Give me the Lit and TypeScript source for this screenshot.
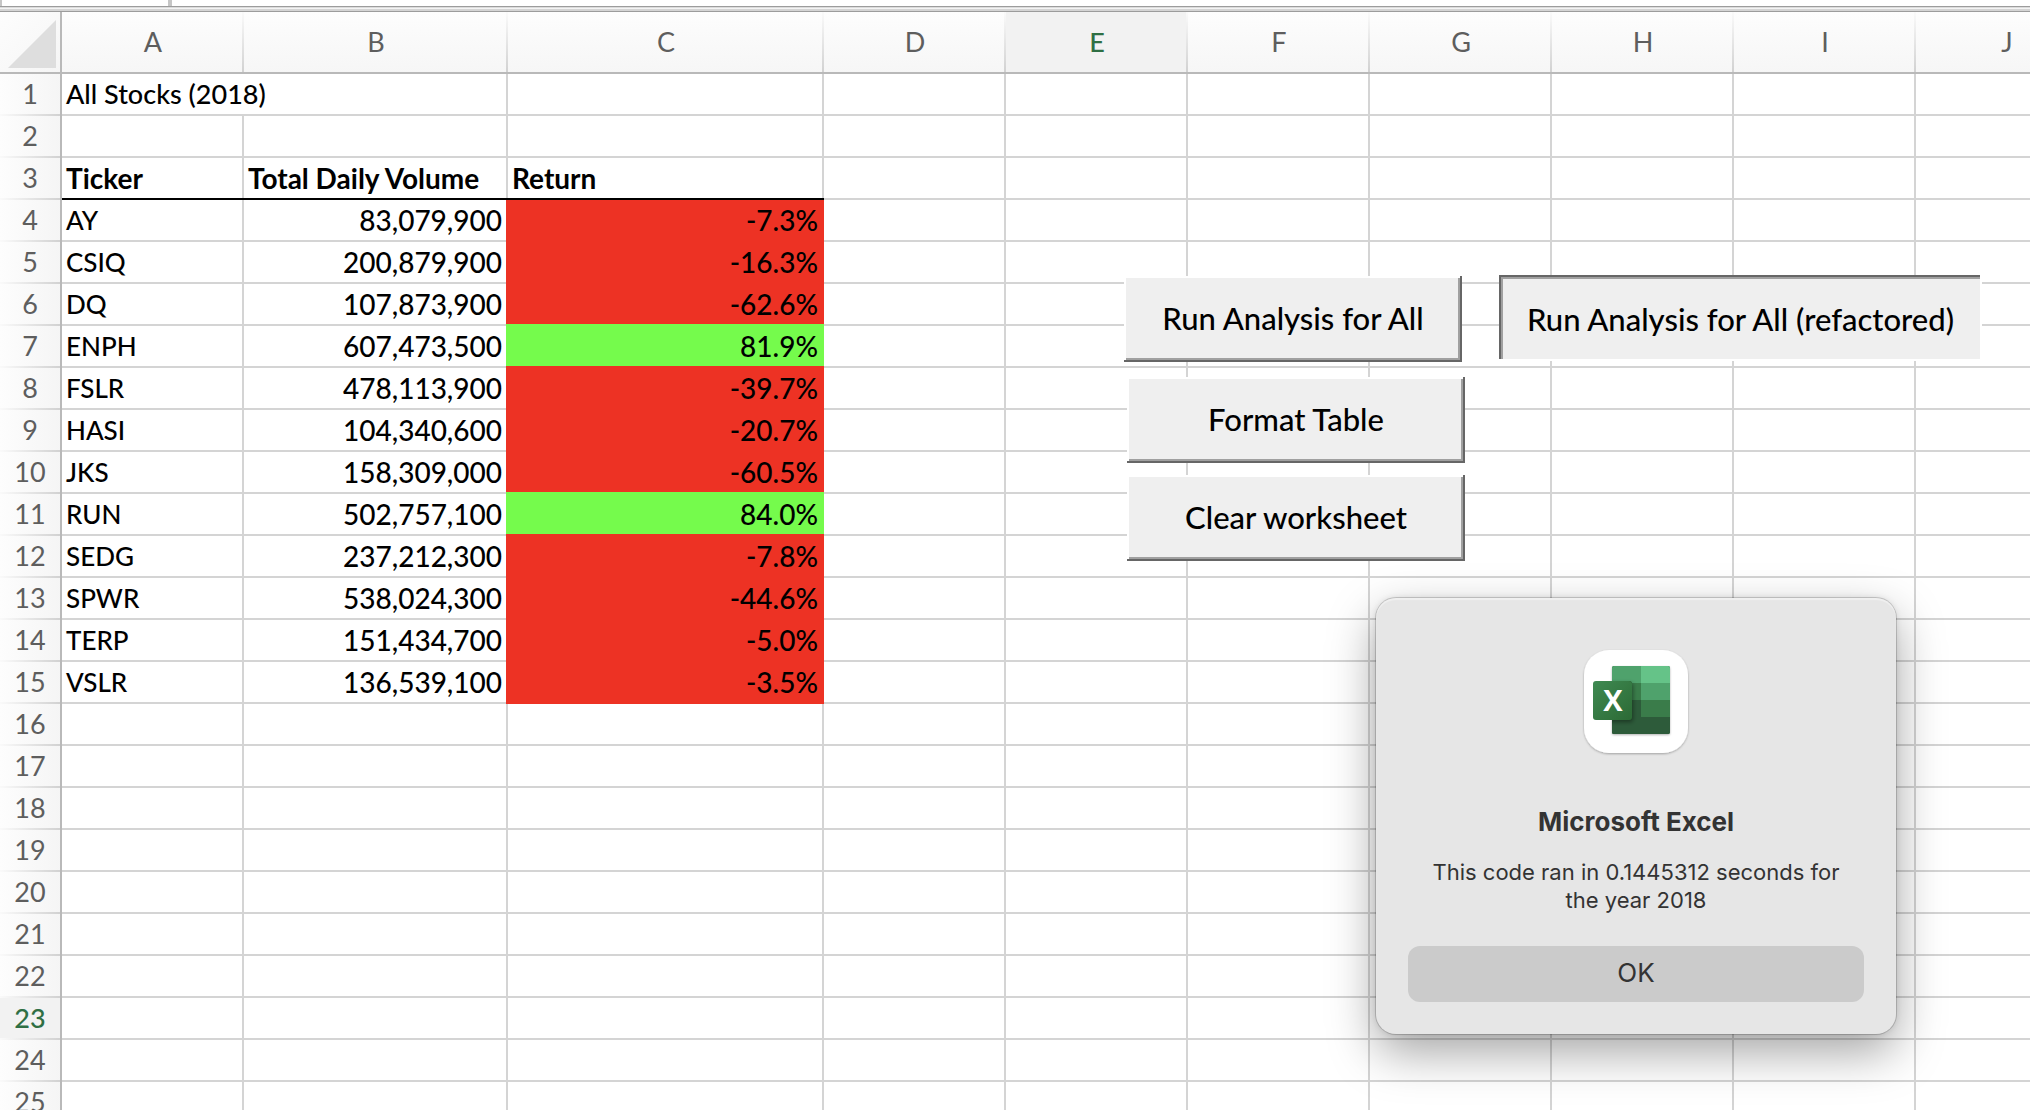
import { LitElement, html, css, svg, nothing } from "lit";
import { customElement, property } from "lit/decorators.js";

interface Stock {
  ticker: string;
  volume: string;
  change: string;
}

const COLUMNS = ["A", "B", "C", "D", "E", "F", "G", "H", "I", "J"];
const ROW_COUNT = 25;
const ACTIVE_COLUMN = "E";
const ACTIVE_ROW = 23;
const FIRST_STOCK_ROW = 4;

const STOCKS: Stock[] = [
  { ticker: "AY", volume: "83,079,900", change: "-7.3%" },
  { ticker: "CSIQ", volume: "200,879,900", change: "-16.3%" },
  { ticker: "DQ", volume: "107,873,900", change: "-62.6%" },
  { ticker: "ENPH", volume: "607,473,500", change: "81.9%" },
  { ticker: "FSLR", volume: "478,113,900", change: "-39.7%" },
  { ticker: "HASI", volume: "104,340,600", change: "-20.7%" },
  { ticker: "JKS", volume: "158,309,000", change: "-60.5%" },
  { ticker: "RUN", volume: "502,757,100", change: "84.0%" },
  { ticker: "SEDG", volume: "237,212,300", change: "-7.8%" },
  { ticker: "SPWR", volume: "538,024,300", change: "-44.6%" },
  { ticker: "TERP", volume: "151,434,700", change: "-5.0%" },
  { ticker: "VSLR", volume: "136,539,100", change: "-3.5%" },
];

@customElement("sheet-grid")
export class SheetGrid extends LitElement {
  static styles = css`
    :host {
      display: block;
      --line: #d4d4d4;
      --edge: #b9b9b9;
    }
    .grid {
      width: 2098px;
      table-layout: fixed;
      border-collapse: separate;
      border-spacing: 0;
      color: #000;
      font: 400 27px/40px Lato, "Liberation Sans", sans-serif;
    }
    .col-rows {
      width: 62px;
    }
    .col-b {
      width: 264px;
    }
    .col-c {
      width: 316px;
    }
    .col {
      width: 182px;
    }
    th,
    td {
      box-sizing: border-box;
      height: 42px;
      padding: 0 6px 2px 4px;
      white-space: nowrap;
      text-align: left;
      font-weight: 400;
    }
    td {
      --bottom: var(--line);
      font-weight: 500;
      background:
        linear-gradient(var(--bottom), var(--bottom)) left bottom / 100% 2px no-repeat,
        linear-gradient(var(--line), var(--line)) right top / 2px 100% no-repeat,
        #fff;
    }
    .corner,
    .column {
      height: 62px;
      padding: 0 0 2px;
      text-align: center;
      color: #5e5e5e;
    }
    .corner {
      background:
        linear-gradient(var(--edge), var(--edge)) left bottom / 100% 2px no-repeat,
        linear-gradient(var(--edge), var(--edge)) right top / 2px 100% no-repeat,
        linear-gradient(135deg, #fdfdfd, #f5f5f5);
    }
    .corner svg {
      display: block;
    }
    .column {
      background:
        linear-gradient(var(--edge), var(--edge)) left bottom / 100% 2px no-repeat,
        linear-gradient(#fafafa, #d0d0d0) right top / 2px 100% no-repeat,
        linear-gradient(#fdfdfd, #f6f6f6);
    }
    .column.active {
      color: #2f6f44;
      font-weight: 500;
      background:
        linear-gradient(var(--edge), var(--edge)) left bottom / 100% 2px no-repeat,
        linear-gradient(#fafafa, #d0d0d0) right top / 2px 100% no-repeat,
        #f2f2f2;
    }
    .row {
      padding: 0 2px 2px 0;
      text-align: center;
      color: #5e5e5e;
      background:
        linear-gradient(var(--edge), var(--edge)) right top / 2px 100% no-repeat,
        linear-gradient(90deg, #fafafa, #d0d0d0) left bottom / 100% 2px no-repeat,
        linear-gradient(90deg, #fdfdfd, #f5f5f5);
    }
    .row.active {
      color: #2f6f44;
      font-weight: 500;
      background:
        linear-gradient(var(--edge), var(--edge)) right top / 2px 100% no-repeat,
        linear-gradient(90deg, #fafafa, #d0d0d0) left bottom / 100% 2px no-repeat,
        #f2f2f2;
    }
    .heading {
      --bottom: #000;
      font-weight: 700;
      font-size: 28px;
    }
    .ticker {
      font-size: 26px;
    }
    .number {
      text-align: right;
      font-size: 28px;
    }
    .loss,
    .gain {
      background: var(--fill);
      box-shadow: -2px 0 0 var(--fill), 0 -2px 0 var(--fill), -2px -2px 0 var(--fill);
    }
    .loss {
      --fill: #ed3224;
    }
    .gain {
      --fill: #75fb4c;
    }
    .first {
      box-shadow: -2px 0 0 var(--fill);
    }
  `;

  private blanks(from: number) {
    return COLUMNS.slice(from).map(() => html`<td></td>`);
  }

  private cells(row: number) {
    if (row === 1) return html`<td colspan="2">All Stocks (2018)</td>${this.blanks(2)}`;
    if (row === 3) {
      return html`<td class="heading">Ticker</td>
        <td class="heading">Total Daily Volume</td>
        <td class="heading">Return</td>
        ${this.blanks(3)}`;
    }
    const stock = STOCKS[row - FIRST_STOCK_ROW];
    if (!stock) return this.blanks(0);
    const tone = stock.change.startsWith("-") ? "loss" : "gain";
    const first = row === FIRST_STOCK_ROW ? "first" : "";
    return html`<td class="ticker">${stock.ticker}</td>
      <td class="number">${stock.volume}</td>
      <td class="number ${tone} ${first}">${stock.change}</td>
      ${this.blanks(3)}`;
  }

  render() {
    const rows = Array.from({ length: ROW_COUNT }, (_, i) => i + 1);
    return html`
      <table class="grid">
        <colgroup>
          <col class="col-rows" />
          ${COLUMNS.map((c) => html`<col class=${c === "B" ? "col-b" : c === "C" ? "col-c" : "col"} />`)}
        </colgroup>
        <thead>
          <tr>
            <td class="corner">
              <svg width="60" height="60" viewBox="0 0 60 60" aria-hidden="true">
                <path d="M56 8V56H8Z" fill="#dedede" />
              </svg>
            </td>
            ${COLUMNS.map(
              (c) => html`<th scope="col" class="column ${c === ACTIVE_COLUMN ? "active" : ""}">${c}</th>`,
            )}
          </tr>
        </thead>
        <tbody>
          ${rows.map(
            (r) => html`<tr>
              <th scope="row" class="row ${r === ACTIVE_ROW ? "active" : ""}">${r}</th>
              ${this.cells(r)}
            </tr>`,
          )}
        </tbody>
      </table>
    `;
  }
}

@customElement("macro-button")
export class MacroButton extends LitElement {
  static styles = css`
    :host {
      display: block;
    }
    .face {
      display: block;
      width: 100%;
      height: 86px;
      padding: 0 0 2px;
      border: 0;
      border-radius: 0;
      background: #efefef;
      color: #000;
      font: 500 31px/36px Lato, "Liberation Sans", sans-serif;
      white-space: nowrap;
      box-shadow:
        inset -2px -2px 0 #666,
        inset 2px 2px 0 #fff,
        inset -4px -4px 0 #a0a0a0;
    }
    .pressed {
      padding: 2px 0 0;
      box-shadow:
        inset -2px -2px 0 #fff,
        inset 2px 2px 0 #666,
        inset 4px 4px 0 #a0a0a0;
    }
  `;

  @property() label = "";
  @property({ type: Boolean }) pressed = false;

  render() {
    return html`<button
      type="button"
      class="face ${this.pressed ? "pressed" : ""}"
      aria-pressed=${this.pressed ? "true" : nothing}
    >
      ${this.label}
    </button>`;
  }
}

const excelIcon = svg`
  <defs>
    <linearGradient id="badge" x1="0" y1="0" x2="1" y2="1">
      <stop offset="0" stop-color="#3f8a52" />
      <stop offset="1" stop-color="#2c6a35" />
    </linearGradient>
    <clipPath id="book"><rect x="32" y="20" width="58" height="68" rx="2" /></clipPath>
    <filter id="soft" x="-30%" y="-30%" width="160%" height="160%">
      <feDropShadow dx="0" dy="1" stdDeviation="1" flood-opacity="0.3" />
    </filter>
    <filter id="lift" x="-30%" y="-30%" width="160%" height="160%">
      <feDropShadow dx="1" dy="2" stdDeviation="2" flood-opacity="0.4" />
    </filter>
  </defs>
  <rect x="4" y="4" width="104" height="103" rx="25" fill="#fff" filter="url(#soft)" />
  <rect x="32" y="20" width="58" height="68" rx="2" fill="#2d5b3a" filter="url(#soft)" />
  <g clip-path="url(#book)">
    <rect x="32" y="20" width="29" height="18" fill="#4fa26c" />
    <rect x="61" y="20" width="29" height="18" fill="#65c388" />
    <rect x="32" y="37" width="29" height="17" fill="#3a7c4a" />
    <rect x="61" y="37" width="29" height="17" fill="#4fa26c" />
    <rect x="32" y="54" width="29" height="34" fill="#2d5b3a" />
    <rect x="61" y="54" width="29" height="17" fill="#3a7c4a" />
    <rect x="32" y="71" width="58" height="17" fill="#2d5b3a" />
    <rect x="13" y="35" width="39" height="39" rx="3" fill="#1d4427" filter="url(#lift)" />
  </g>
  <rect x="13" y="35" width="39" height="39" rx="3" fill="url(#badge)" />
  <text x="33" y="65" text-anchor="middle" fill="#fff" font-family="Open Sans, sans-serif" font-weight="700" font-size="29">X</text>
`;

@customElement("message-box")
export class MessageBox extends LitElement {
  static styles = css`
    :host {
      display: block;
    }
    .box {
      position: static;
      box-sizing: border-box;
      width: 100%;
      margin: 0;
      padding: 48px 32px 32px;
      border: 0;
      border-radius: 20px;
      background: #e6e6e6;
      color: #333;
      display: flex;
      flex-direction: column;
      align-items: center;
      font-family: Inter, "Liberation Sans", sans-serif;
      text-align: center;
      box-shadow:
        inset 0 2px 1px rgba(255, 255, 255, 0.4),
        0 0 0 1px rgba(0, 0, 0, 0.16),
        0 0 6px rgba(0, 0, 0, 0.12),
        0 18px 48px rgba(0, 0, 0, 0.36);
    }
    .icon {
      display: block;
    }
    .title {
      margin: 48px 0 0;
      font-size: 26px;
      line-height: 32px;
      font-weight: 700;
    }
    .text {
      margin: 20px 0 0;
      padding: 0 16px;
      font-size: 22px;
      line-height: 28px;
    }
    .ok {
      width: 100%;
      height: 56px;
      margin-top: 32px;
      padding: 0 0 2px;
      border: 0;
      border-radius: 12px;
      background: #cbcbcb;
      color: #333;
      font: 400 26px/32px Inter, "Liberation Sans", sans-serif;
    }
  `;

  render() {
    return html`
      <dialog class="box" open aria-labelledby="title" aria-describedby="text">
        <svg class="icon" width="112" height="112" viewBox="0 0 112 112" aria-hidden="true">${excelIcon}</svg>
        <h2 class="title" id="title">Microsoft Excel</h2>
        <p class="text" id="text">This code ran in 0.1445312 seconds for the year 2018</p>
        <button type="button" class="ok">OK</button>
      </dialog>
    `;
  }
}

@customElement("app-root")
export class AppRoot extends LitElement {
  static styles = css`
    :host {
      display: block;
      height: 100vh;
      overflow: hidden;
      background: #fff;
    }
    .formula-bar {
      display: flex;
      height: 6px;
      background: #fff;
    }
    .name-box {
      box-sizing: border-box;
      width: 172px;
      border: solid #c6c6c6;
      border-width: 0 4px 0 2px;
    }
    .divider {
      height: 6px;
      background: linear-gradient(
        #9c9c9c 1px,
        #dcdcdc 1px 2px,
        #f4f4f4 2px 3px,
        #d4d4d4 3px 5px,
        #9c9c9c 5px
      );
    }
    .sheet {
      position: relative;
    }
    .float {
      position: absolute;
    }
    .run {
      left: 1124px;
      top: 264px;
      width: 338px;
    }
    .refactored {
      left: 1499px;
      top: 263px;
      width: 483px;
    }
    .format {
      left: 1127px;
      top: 365px;
      width: 338px;
    }
    .clear {
      left: 1127px;
      top: 463px;
      width: 338px;
    }
    .alert {
      left: 1376px;
      top: 586px;
      width: 520px;
    }
  `;

  render() {
    return html`
      <div class="formula-bar"><div class="name-box"></div></div>
      <div class="divider"></div>
      <main class="sheet">
        <sheet-grid></sheet-grid>
        <macro-button class="float run" label="Run Analysis for All"></macro-button>
        <macro-button class="float refactored" label="Run Analysis for All (refactored)" pressed></macro-button>
        <macro-button class="float format" label="Format Table"></macro-button>
        <macro-button class="float clear" label="Clear worksheet"></macro-button>
        <message-box class="float alert"></message-box>
      </main>
    `;
  }
}
